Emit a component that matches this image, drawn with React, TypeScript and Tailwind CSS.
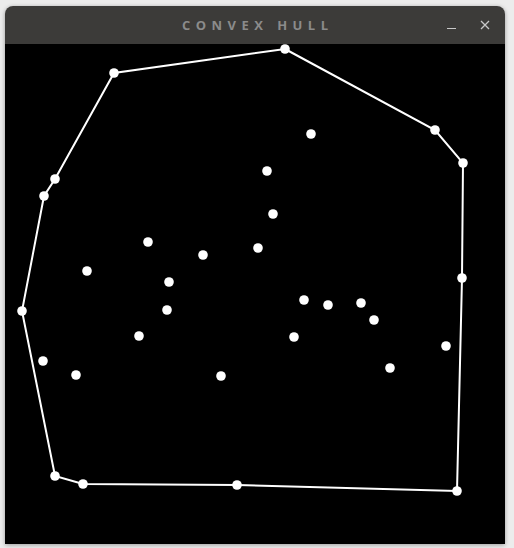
import React from "react";

const OX = 5;
const OY = 44;

const hull: [number, number][] = [
  [285, 49],
  [435, 130],
  [463, 163],
  [462, 278],
  [457, 491],
  [237, 485],
  [83, 484],
  [55, 476],
  [22, 311],
  [44, 196],
  [55, 179],
  [114, 73],
];

const inner: [number, number][] = [
  [311, 134],
  [267, 171],
  [273, 214],
  [148, 242],
  [203, 255],
  [258, 248],
  [87, 271],
  [169, 282],
  [167, 310],
  [304, 300],
  [328, 305],
  [361, 303],
  [374, 320],
  [294, 337],
  [139, 336],
  [43, 361],
  [76, 375],
  [221, 376],
  [390, 368],
  [446, 346],
];

export default function App() {
  const pts = hull.map(([x, y]) => `${x - OX},${y - OY}`).join(" ");
  return (
    <div className="w-[514px] h-[548px] bg-[#ececec] pt-[6px] pl-[5px]">
      <div className="w-[500px] rounded-t-[8px] overflow-hidden shadow-[0_1px_4px_rgba(0,0,0,0.35)]">
        <div className="relative h-[38px] bg-[#3c3b39] flex items-center justify-center">
          <span
            className="text-[13px] font-bold text-[#8b8b8b] tracking-[0.42em] pl-[0.42em] pt-[2px]"
            style={{ fontFamily: '"Open Sans", "Noto Sans", sans-serif' }}
          >
            CONVEX HULL
          </span>
          <div className="absolute right-[15px] top-0 h-full flex items-center gap-[24px]">
            <div className="w-[9px] h-[1px] bg-[#c8c8c8] mt-[6px]" />
            <svg width="10" height="10" viewBox="0 0 10 10">
              <path d="M1 1L9 9M9 1L1 9" stroke="#c8c8c8" strokeWidth="1.3" />
            </svg>
          </div>
        </div>
        <div className="h-[500px] bg-black">
          <svg width="500" height="500" viewBox="0 0 500 500" className="block">
            <polygon points={pts} fill="none" stroke="white" strokeWidth="2" />
            {hull.concat(inner).map(([x, y], i) => (
              <circle key={i} cx={x - OX} cy={y - OY} r="4.8" fill="white" />
            ))}
          </svg>
        </div>
      </div>
    </div>
  );
}
